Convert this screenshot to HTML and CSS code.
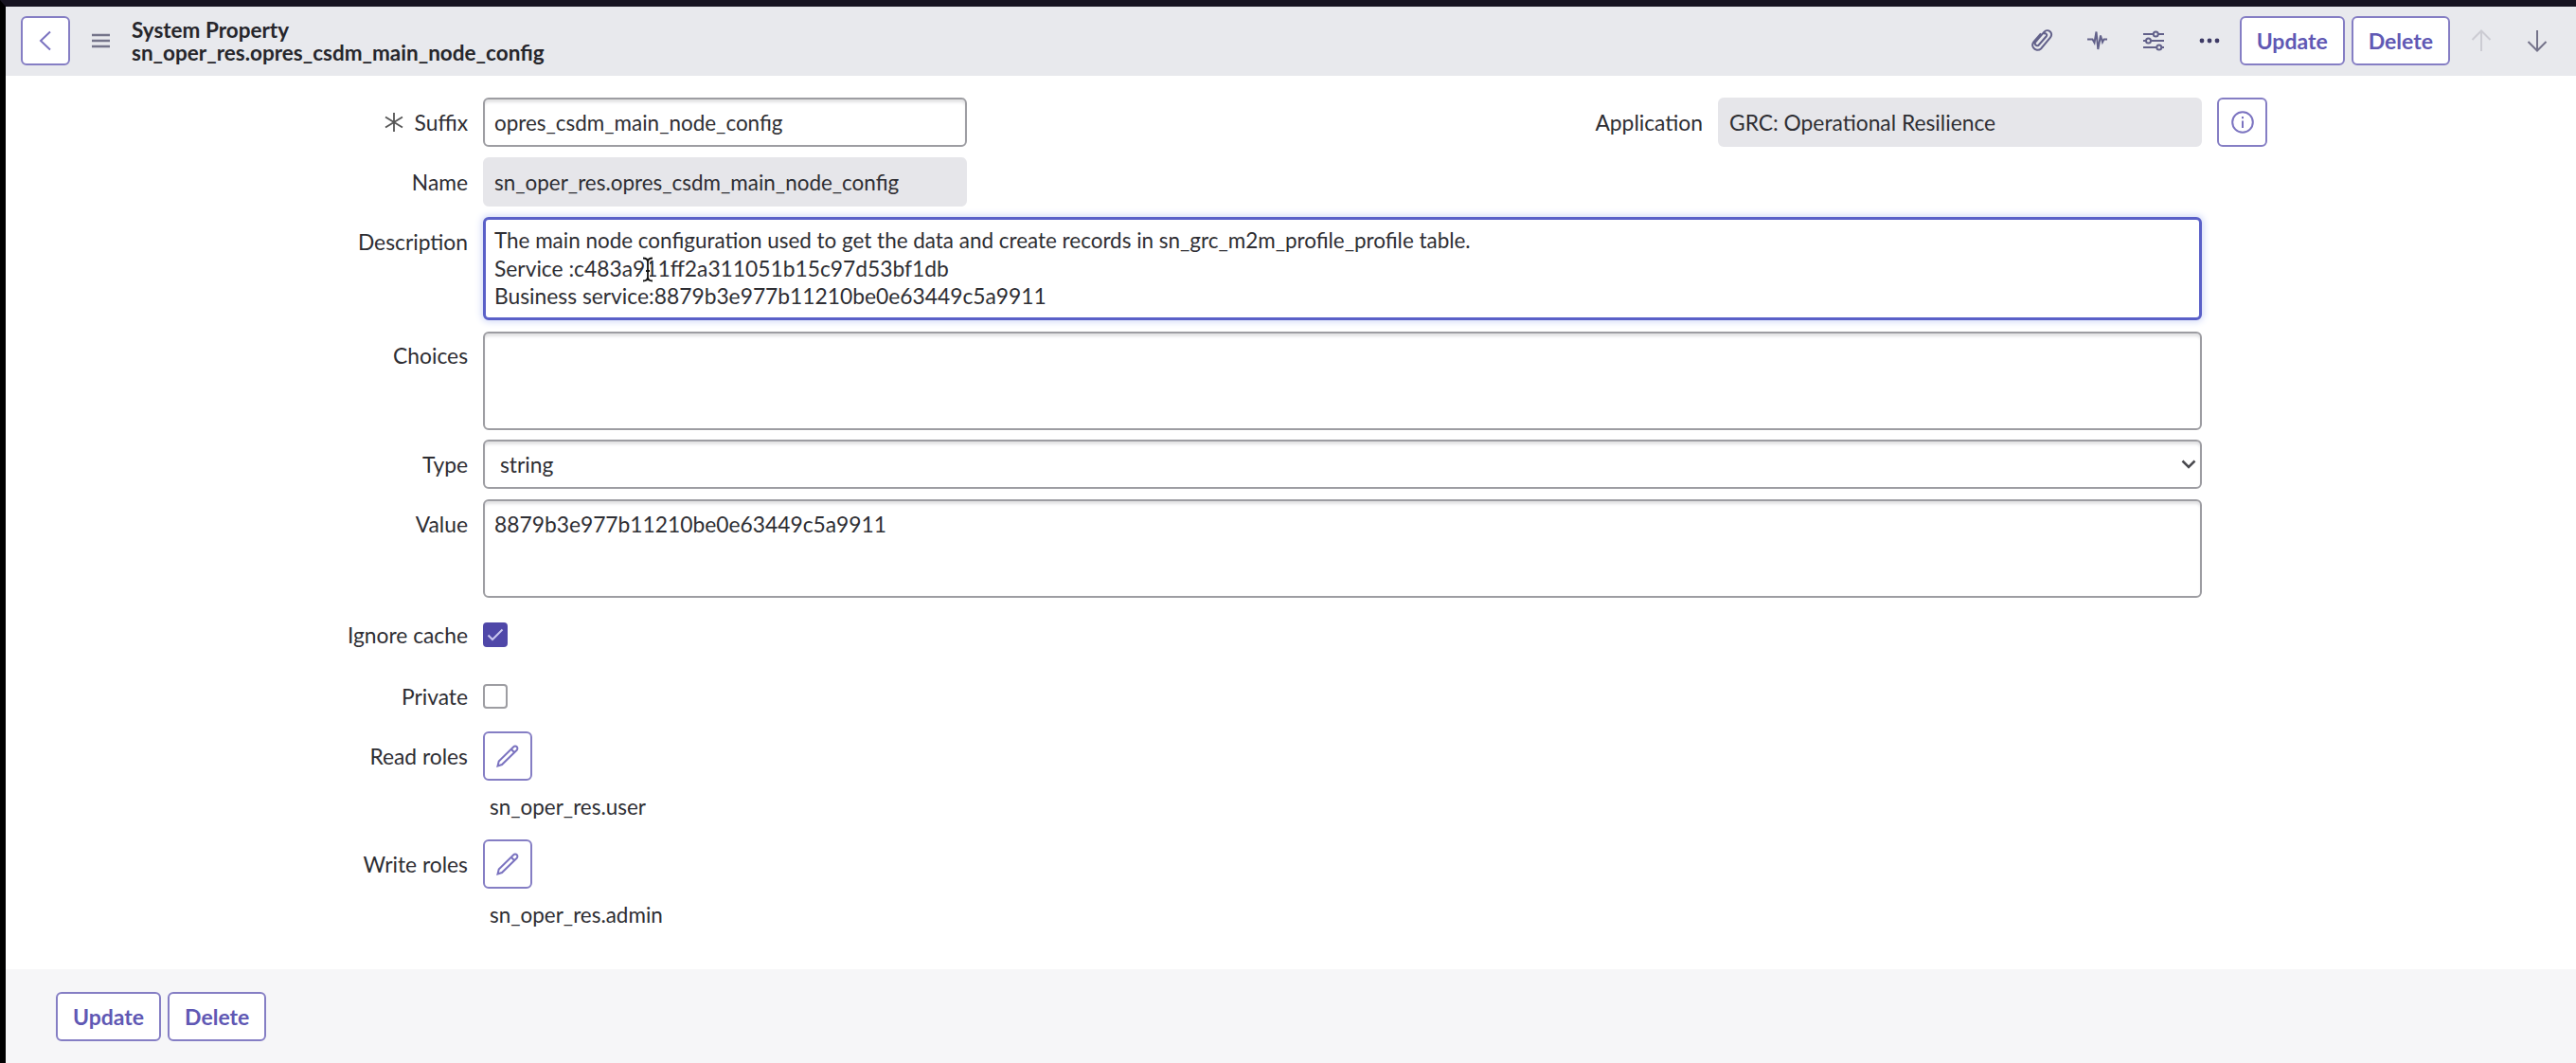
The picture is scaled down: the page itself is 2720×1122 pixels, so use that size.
FILE: index.html
```html
<!DOCTYPE html>
<html lang="en">
<head>
  <meta charset="UTF-8" />
  <meta name="viewport" content="width=device-width, initial-scale=1.0"/>
  <title>System Property</title>
  <link rel="stylesheet" href="styles.css">
</head>
<body>
  <header class="header">
    <button class="btn icon-btn back" aria-label="Back">
      <svg width="14" height="24" viewBox="0 0 14 24"><path d="M12 2.500L2 12l10 9.500"/></svg>
    </button>
    <svg class="menu" width="20" height="16" viewBox="0 0 20 16"><path d="M0 2h19M0 8h19M0 14h19"/></svg>
    <h1 class="title">System Property<br>sn_oper_res.opres_csdm_main_node_config</h1>

    <div class="tools">
      <svg width="24" height="26" viewBox="0 0 24 26"><path d="M17 8l-8.300 9.300a2.200 2.200 0 0 1-3.400-3l9.200-10.600a4.300 4.300 0 0 1 6.600 5.600L11 21.500a5.300 5.300 0 0 1-8-1.200c-1.500-2.500-.9-4.800.6-6.500L11 5.400M8 18.300l8.800-10a2 2 0 0 0-3-2.600"/></svg>
      <svg width="24" height="26" viewBox="0 0 24 26"><path d="M1 11.500h5.500l2 3.500L10.500 3.500l1.800 18.500 2.700-14.500 2 7 1.500-3H22"/></svg>
      <svg width="24" height="26" viewBox="0 0 24 26"><path d="M1 6h10.500M17 6h6M1 13h3M9 13h14M1 20h14M20.500 20H23"/><circle cx="14.300" cy="6" r="2.500"/><circle cx="6.500" cy="13" r="2.500"/><circle cx="17.800" cy="20" r="2.500"/></svg>
      <svg class="dots" width="24" height="26" viewBox="0 0 24 26"><circle cx="4" cy="13" r="2.400"/><circle cx="12" cy="13" r="2.400"/><circle cx="20" cy="13" r="2.400"/></svg>
    </div>
    <button class="btn">Update</button>
    <button class="btn">Delete</button>
    <div class="arrows">
      <svg class="off" width="22" height="24" viewBox="0 0 22 24"><path d="M11 23V2M1.500 11L11 1.500 20.500 11"/></svg>
      <svg width="22" height="24" viewBox="0 0 22 24"><path d="M11 1v21M1.500 13l9.500 9.500 9.500-9.500"/></svg>
    </div>
  </header>

  <main class="form">
    <div class="row">
      <label class="label"><svg class="required" width="20" height="20" viewBox="0 0 20 20"><path d="M10 0v20M1 4.500l18 11M19 4.500L1 15.500"/></svg>Suffix</label>
      <input class="field short path" value="opres_csdm_main_node_config">
      <label class="label app-label">Application</label>
      <input class="field short readonly" value="GRC: Operational Resilience" readonly>
      <button class="btn icon-btn info" aria-label="Info">
        <svg width="24" height="24" viewBox="0 0 24 24"><circle cx="12" cy="12" r="10.800"/><path d="M12 10.500V18M12 6v2.200"/></svg>
      </button>
    </div>

    <div class="row">
      <label class="label">Name</label>
      <input class="field short readonly path" value="sn_oper_res.opres_csdm_main_node_config" readonly>
    </div>

    <div class="row">
      <label class="label">Description</label>
      <div class="area-wrap">
        <div class="field area active" contenteditable="true" spellcheck="false">
          <div class="path">The main node configuration used to get the data and create records in sn_grc_m2m_profile_profile table.</div>
          <div>Service :c483a911ff2a311051b15c97d53bf1db</div>
          <div>Business service:8879b3e977b11210be0e63449c5a9911</div>
        </div>
        <svg class="cursor" width="12" height="27" viewBox="0 0 12 27"><path class="halo" d="M1 1.500q5 0 5 4v16q0 4-5 4M11 1.500q-5 0-5 4v16q0 4 5 4M4 15h4"/><path d="M1 1.500q5 0 5 4v16q0 4-5 4M11 1.500q-5 0-5 4v16q0 4 5 4M4 15h4"/></svg>
      </div>
    </div>

    <div class="row choices">
      <label class="label">Choices</label>
      <textarea class="field area"></textarea>
    </div>

    <div class="row type">
      <label class="label">Type</label>
      <div class="field select">
        <span>string</span>
        <svg width="16" height="10" viewBox="0 0 16 10"><path d="M1.500 1.500L8 8l6.500-6.500"/></svg>
      </div>
    </div>

    <div class="row">
      <label class="label">Value</label>
      <textarea class="field area" spellcheck="false">8879b3e977b11210be0e63449c5a9911</textarea>
    </div>

    <div class="row check-row">
      <label class="label">Ignore cache</label>
      <span class="check checked"><svg width="18" height="14" viewBox="0 0 18 14"><path d="M1.500 7.500l4.500 4.500L16.500 1.500"/></svg></span>
    </div>

    <div class="row check-row">
      <label class="label">Private</label>
      <span class="check"></span>
    </div>

    <div class="row roles">
      <label class="label">Read roles</label>
      <div>
        <button class="btn icon-btn" aria-label="Edit read roles">
          <svg width="24" height="24" viewBox="0 0 24 24"><path d="M1.500 22.500l1.200-5L18.300 2.300a2.200 2.200 0 0 1 3.400 3.400L6 21zM15.800 4.800l3.400 3.400"/></svg>
        </button>
        <p class="role path">sn_oper_res.user</p>
      </div>
    </div>

    <div class="row roles">
      <label class="label">Write roles</label>
      <div>
        <button class="btn icon-btn" aria-label="Edit write roles">
          <svg width="24" height="24" viewBox="0 0 24 24"><path d="M1.500 22.500l1.200-5L18.300 2.300a2.200 2.200 0 0 1 3.400 3.400L6 21zM15.800 4.800l3.400 3.400"/></svg>
        </button>
        <p class="role path">sn_oper_res.admin</p>
      </div>
    </div>
  </main>

  <footer class="footer">
    <button class="btn">Update</button>
    <button class="btn">Delete</button>
  </footer>
</body>
</html>
```
FILE: styles.css
```css
* {
  box-sizing: border-box;
}

body {
  margin: 0;
  height: 1122px;
  display: flex;
  flex-direction: column;
  border-top: 7px solid #171421;
  border-left: 6px solid #000;
  background-color: #fff;
  color: #2e2e33;
  font-family: Lato, sans-serif;
  font-size: 22.8px;
  overflow: hidden;
}

svg {
  display: block;
  flex: none;
  fill: none;
  stroke: currentColor;
  stroke-width: 2;
}

.header {
  height: 73px;
  padding: 0 30px 1px 16px;
  display: flex;
  align-items: center;
  background-color: #e8e9ed;
}

.menu {
  margin: 0 22px 0 23px;
  color: #74748a;
  stroke-width: 2.5;
}

.title {
  margin: 1px 0 0;
  font-size: 22.5px;
  line-height: 24px;
  font-weight: bold;
  color: #26262b;
}

.tools {
  display: flex;
  gap: 35px;
  margin: 0 20px 0 auto;
  color: #62618a;
}

.dots {
  fill: #3e3b66;
  stroke: none;
}

.arrows {
  display: flex;
  gap: 37px;
  margin-left: 22px;
  color: #74738a;
}

.arrows .off {
  color: #ccccd3;
}

.btn {
  height: 52px;
  padding: 0 16px;
  border: 2px solid #857ec4;
  border-radius: 6px;
  background-color: #fff;
  color: #6058b4;
  font-family: inherit;
  font-size: 23px;
  font-weight: bold;
}

.header .btn + .btn,
.footer .btn + .btn {
  margin-left: 7px;
}

.icon-btn {
  width: 52px;
  padding: 0;
  display: flex;
  align-items: center;
  justify-content: center;
  color: #7b73c0;
}

.form {
  flex: 1;
  padding-top: 23px;
}

.row {
  display: flex;
  align-items: flex-start;
  margin-bottom: 11px;
}

.label {
  width: 488px;
  margin-right: 16px;
  display: flex;
  justify-content: flex-end;
  align-items: center;
  line-height: 52px;
  flex: none;
}

.required {
  margin-right: 12px;
  stroke-width: 1.8;
  color: #555;
}

.app-label {
  width: 777px;
}

.field {
  display: block;
  width: 1815px;
  height: 52px;
  margin: 0;
  padding: 0 10px;
  border: 2px solid #9d9da2;
  border-radius: 6px;
  background-color: #fff;
  box-shadow: inset 0 4px 3px -1px #e2e2e4;
  color: #2e2e33;
  font-family: inherit;
  font-size: 22.8px;
  outline: none;
}

.short {
  width: 511px;
}

.readonly {
  border-color: #e6e6ea;
  background-color: #e6e6ea;
  box-shadow: none;
}

.path {
  font-size: 22.45px;
}

.info {
  width: 53px;
  margin-left: 16px;
}

.area-wrap {
  position: relative;
}

.area {
  height: 104px;
  padding: 10px;
  line-height: 28.8px;
  resize: none;
  overflow: hidden;
}

.active {
  height: 109px;
  padding: 8px 9px;
  border: 3px solid #5a60c8;
  box-shadow: 0 0 7px 2px #d5dcf8;
}

/* I-beam mouse pointer over the text */
.cursor {
  position: absolute;
  left: 168px;
  top: 42px;
  color: #111;
  stroke-width: 1.8;
}

.halo {
  stroke: #fff;
  stroke-width: 4;
}

.choices {
  margin: 12px 0 10px;
}

.choices .label {
  line-height: 51px;
}

.select {
  padding: 0 4px 0 16px;
  display: flex;
  align-items: center;
  justify-content: space-between;
}

.select svg {
  color: #4b4b50;
  stroke-width: 2.5;
}

.check-row {
  height: 52px;
  align-items: center;
  margin: 13px 0;
}

.check {
  width: 26px;
  height: 26px;
  display: flex;
  align-items: center;
  justify-content: center;
  border: 2px solid #9d9da2;
  border-radius: 4px;
}

.checked {
  border-color: #4f47a8;
  background-color: #4f47a8;
  color: #c9c6ef;
}

.roles {
  height: 105px;
  margin-top: -2px;
}

.role {
  margin: 14px 0 0 7px;
  line-height: 28px;
}

.footer {
  height: 99px;
  padding: 24px 53px;
  display: flex;
  background-color: #f6f6f8;
}
```
